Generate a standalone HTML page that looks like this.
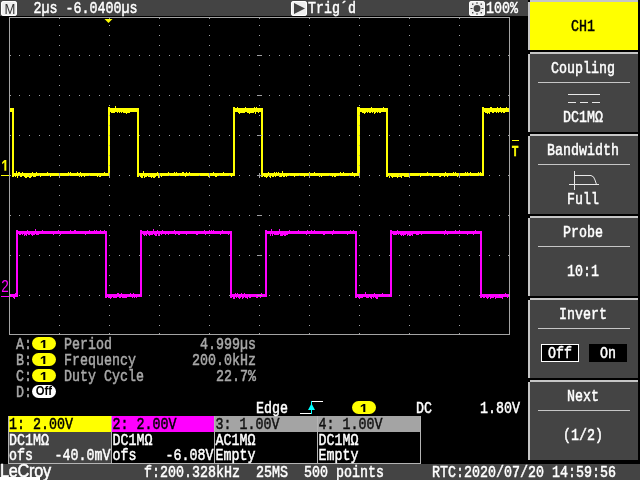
<!DOCTYPE html>
<html><head><meta charset="utf-8"><title>LeCroy</title>
<style>
html,body{margin:0;padding:0;background:#000;}
body{width:640px;height:480px;overflow:hidden;position:relative;font-family:"Liberation Mono", "DejaVu Sans Mono", monospace;}
.a{position:absolute;}
.t{position:absolute;font-family:"Liberation Mono", "DejaVu Sans Mono", monospace;font-size:13.333px;line-height:16px;height:16px;white-space:pre;transform-origin:0 0;transform:translateY(-2.5px) scaleY(1.25);font-weight:normal;-webkit-text-stroke:0.4px currentColor;letter-spacing:0;}
.p{position:absolute;width:24px;height:13px;line-height:13px;text-align:center;font-family:"Liberation Sans",sans-serif;font-weight:bold;color:#000;}
.m{position:absolute;width:10px;height:16px;line-height:16px;text-align:center;font-family:"Liberation Sans",sans-serif;font-size:16.5px;transform-origin:0 0;transform:translateX(0.8px) scaleX(0.82);}
.bar{position:absolute;background:#444;}
.btn{position:absolute;left:528px;width:110px;background:#444;}
.btn:before{content:"";position:absolute;left:2px;top:0;right:0;height:2px;background:#c6c6c6;}
.btn:after{content:"";position:absolute;left:0;top:2px;width:2px;bottom:0;background:#c6c6c6;}
.btn b{position:absolute;left:0;top:0;width:2px;height:2px;background:#000;}
.sep{position:absolute;left:10px;width:92px;top:30px;height:1px;background:#c6c6c6;}
.pill{position:absolute;width:24px;height:13px;border-radius:6.5px;background:#ffff00;}
.ico{position:absolute;width:16px;height:15px;border-radius:3px;background:#eee;top:1px;box-shadow:inset 0 0 0 1px #fff;}
.chb{position:absolute;top:416px;height:47px;width:102px;border:1px solid #b4b4b4;border-top:none;border-left:none;background:#000;}
.chh{position:absolute;left:0;top:0;right:0;height:16px;}
</style></head><body>

<div class="bar" style="left:0;top:0;width:528px;height:16px"></div>
<div class="ico" style="left:1px"></div>
<div class="ico" style="left:291px"><svg class="a" style="left:0;top:0" width="16" height="15"><path d="M3 2 L14 7.5 L3 13z" fill="#444"/></svg></div>
<div class="ico" style="left:469px"><svg class="a" style="left:0;top:0" width="16" height="15"><circle cx="8" cy="7.5" r="3.4" fill="#444"/><g fill="#444"><rect x="7.5" y="1" width="1" height="2"/><rect x="7.5" y="12" width="1" height="2"/><rect x="1.5" y="7" width="2" height="1"/><rect x="12.5" y="7" width="2" height="1"/><rect x="3" y="2.5" width="1.4" height="1.4"/><rect x="11.6" y="2.5" width="1.4" height="1.4"/><rect x="3" y="11" width="1.4" height="1.4"/><rect x="11.6" y="11" width="1.4" height="1.4"/></g></svg></div>
<svg class="a" style="left:0;top:0" width="528" height="340" viewBox="0 0 528 340">
<path d="M12 108h2V177h-2zM108 107h2V176h-2zM137 108h2V177h-2zM233 107h2V176h-2zM261 108h2V177h-2zM357 107h3V176h-3zM386 108h2V177h-2zM482 107h2V176h-2z" fill="#ffff00" shape-rendering="crispEdges"/>
<path d="M10 110H14M108 110H139M233 110H263M357 110H388M482 110H509" fill="none" stroke="#ffff00" stroke-width="4" shape-rendering="crispEdges"/>
<path d="M12 174.5H110M137 174.5H235M261 174.5H360M386 174.5H484" fill="none" stroke="#ffff00" stroke-width="3" shape-rendering="crispEdges"/>
<path d="M15 176.0h1v1h-1zM16 171.0h1v2h-1zM17 176.0h1v2h-1zM18 172.0h1v1h-1zM19 172.0h1v1h-1zM20 176.0h1v1h-1zM21 176.0h1v1h-1zM22 172.0h1v1h-1zM24 176.0h1v1h-1zM25 176.0h1v2h-1zM26 176.0h1v2h-1zM27 176.0h1v1h-1zM28 176.0h1v1h-1zM29 176.0h1v2h-1zM30 176.0h1v2h-1zM31 176.0h1v1h-1zM32 172.0h1v1h-1zM33 176.0h1v1h-1zM34 176.0h1v1h-1zM35 176.0h1v1h-1zM36 172.0h1v1h-1zM40 176.0h1v1h-1zM47 172.0h1v1h-1zM50 176.0h1v1h-1zM68 172.0h1v1h-1zM70 172.0h1v1h-1zM77 172.0h1v1h-1zM79 176.0h1v1h-1zM80 172.0h1v1h-1zM81 176.0h1v1h-1zM84 176.0h1v1h-1zM97 176.0h1v1h-1zM99 176.0h1v1h-1zM100 176.0h1v1h-1zM104 172.0h1v1h-1zM111 112.0h1v1h-1zM112 112.0h1v1h-1zM113 112.0h1v1h-1zM114 112.0h1v1h-1zM115 106.0h1v2h-1zM117 112.0h1v1h-1zM119 112.0h1v1h-1zM121 112.0h1v1h-1zM123 112.0h1v1h-1zM124 112.0h1v1h-1zM125 112.0h1v1h-1zM126 112.0h1v2h-1zM127 112.0h1v1h-1zM128 112.0h1v1h-1zM129 112.0h1v1h-1zM140 176.0h1v1h-1zM141 176.0h1v2h-1zM142 176.0h1v2h-1zM143 171.0h1v2h-1zM144 176.0h1v2h-1zM145 176.0h1v1h-1zM146 176.0h1v1h-1zM148 176.0h1v1h-1zM149 176.0h1v1h-1zM150 176.0h1v1h-1zM151 176.0h1v2h-1zM152 176.0h1v1h-1zM153 176.0h1v2h-1zM154 176.0h1v2h-1zM155 176.0h1v1h-1zM157 172.0h1v1h-1zM158 176.0h1v2h-1zM159 176.0h1v1h-1zM161 176.0h1v1h-1zM168 172.0h1v1h-1zM174 172.0h1v1h-1zM176 172.0h1v1h-1zM182 172.0h1v1h-1zM183 172.0h1v1h-1zM185 176.0h1v1h-1zM186 172.0h1v1h-1zM189 172.0h1v1h-1zM208 176.0h1v1h-1zM213 172.0h1v1h-1zM215 176.0h1v1h-1zM216 176.0h1v1h-1zM223 172.0h1v1h-1zM231 176.0h1v1h-1zM237 107.0h1v1h-1zM238 112.0h1v1h-1zM239 112.0h1v2h-1zM240 112.0h1v1h-1zM241 112.0h1v1h-1zM242 112.0h1v1h-1zM243 112.0h1v1h-1zM244 112.0h1v1h-1zM245 107.0h1v1h-1zM247 112.0h1v1h-1zM248 112.0h1v1h-1zM249 112.0h1v2h-1zM250 112.0h1v1h-1zM251 112.0h1v1h-1zM252 112.0h1v1h-1zM253 112.0h1v1h-1zM254 107.0h1v1h-1zM255 112.0h1v2h-1zM256 107.0h1v1h-1zM258 112.0h1v1h-1zM264 176.0h1v1h-1zM265 176.0h1v1h-1zM266 176.0h1v2h-1zM267 176.0h1v1h-1zM268 172.0h1v1h-1zM269 176.0h1v1h-1zM270 176.0h1v2h-1zM272 176.0h1v1h-1zM273 176.0h1v1h-1zM274 172.0h1v1h-1zM275 176.0h1v1h-1zM276 172.0h1v1h-1zM278 172.0h1v1h-1zM279 176.0h1v1h-1zM280 176.0h1v1h-1zM281 176.0h1v1h-1zM282 171.0h1v2h-1zM283 176.0h1v1h-1zM284 176.0h1v1h-1zM286 176.0h1v1h-1zM294 176.0h1v1h-1zM304 176.0h1v1h-1zM309 172.0h1v1h-1zM314 172.0h1v1h-1zM319 176.0h1v1h-1zM321 176.0h1v1h-1zM332 176.0h1v1h-1zM334 176.0h1v1h-1zM335 176.0h1v1h-1zM340 172.0h1v1h-1zM343 172.0h1v1h-1zM352 172.0h1v1h-1zM354 176.0h1v1h-1zM362 112.0h1v1h-1zM363 112.0h1v1h-1zM364 112.0h1v2h-1zM365 112.0h1v1h-1zM367 112.0h1v1h-1zM369 112.0h1v1h-1zM370 112.0h1v1h-1zM371 107.0h1v1h-1zM372 112.0h1v1h-1zM374 112.0h1v2h-1zM375 112.0h1v1h-1zM377 112.0h1v1h-1zM379 112.0h1v1h-1zM380 112.0h1v1h-1zM383 107.0h1v1h-1zM389 176.0h1v2h-1zM391 176.0h1v1h-1zM392 176.0h1v2h-1zM393 176.0h1v1h-1zM394 176.0h1v1h-1zM395 176.0h1v1h-1zM396 176.0h1v1h-1zM397 176.0h1v2h-1zM398 176.0h1v1h-1zM399 176.0h1v1h-1zM400 176.0h1v1h-1zM401 176.0h1v2h-1zM404 176.0h1v1h-1zM405 176.0h1v1h-1zM406 176.0h1v1h-1zM407 176.0h1v1h-1zM408 176.0h1v1h-1zM420 176.0h1v1h-1zM427 172.0h1v1h-1zM432 176.0h1v1h-1zM439 176.0h1v1h-1zM440 176.0h1v1h-1zM444 176.0h1v1h-1zM445 172.0h1v1h-1zM447 176.0h1v1h-1zM453 172.0h1v1h-1zM455 172.0h1v1h-1zM457 176.0h1v1h-1zM465 172.0h1v1h-1zM467 172.0h1v1h-1zM470 172.0h1v1h-1zM478 172.0h1v1h-1zM480 172.0h1v1h-1zM485 112.0h1v1h-1zM486 112.0h1v1h-1zM487 112.0h1v2h-1zM488 112.0h1v1h-1zM489 112.0h1v2h-1zM490 107.0h1v1h-1zM491 107.0h1v1h-1zM492 112.0h1v1h-1zM493 112.0h1v1h-1zM496 112.0h1v1h-1zM497 107.0h1v1h-1zM498 112.0h1v1h-1zM500 107.0h1v1h-1zM501 112.0h1v1h-1zM503 112.0h1v1h-1zM504 112.0h1v1h-1zM506 107.0h1v1h-1z" fill="#ffff00" shape-rendering="crispEdges"/>
<path d="M16 230h2V297h-2zM105 231h2V298h-2zM140 230h2V297h-2zM230 231h2V298h-2zM265 230h2V297h-2zM355 231h2V298h-2zM390 230h2V297h-2zM480 231h2V298h-2z" fill="#ff00ff" shape-rendering="crispEdges"/>
<path d="M16 232.5H107M140 232.5H232M265 232.5H357M390 232.5H482" fill="none" stroke="#ff00ff" stroke-width="3" shape-rendering="crispEdges"/>
<path d="M10 295.5H18M105 295.5H142M230 295.5H267M355 295.5H392M480 295.5H509" fill="none" stroke="#ff00ff" stroke-width="3" shape-rendering="crispEdges"/>
<path d="M13 297.0h1v1h-1zM14 297.0h1v2h-1zM15 293.0h1v1h-1zM19 234.0h1v1h-1zM20 234.0h1v1h-1zM22 234.0h1v1h-1zM24 234.0h1v2h-1zM25 234.0h1v1h-1zM26 234.0h1v2h-1zM27 230.0h1v1h-1zM28 234.0h1v1h-1zM29 234.0h1v1h-1zM31 234.0h1v1h-1zM32 234.0h1v2h-1zM33 234.0h1v1h-1zM34 234.0h1v1h-1zM35 229.0h1v2h-1zM36 234.0h1v1h-1zM37 234.0h1v1h-1zM38 234.0h1v1h-1zM42 230.0h1v1h-1zM53 234.0h1v1h-1zM58 230.0h1v1h-1zM60 234.0h1v1h-1zM70 230.0h1v1h-1zM74 230.0h1v1h-1zM75 230.0h1v1h-1zM85 234.0h1v1h-1zM89 230.0h1v1h-1zM94 230.0h1v1h-1zM96 230.0h1v1h-1zM100 230.0h1v1h-1zM104 230.0h1v1h-1zM108 297.0h1v1h-1zM109 297.0h1v1h-1zM110 297.0h1v2h-1zM111 297.0h1v1h-1zM113 297.0h1v1h-1zM114 297.0h1v1h-1zM115 297.0h1v1h-1zM116 297.0h1v1h-1zM117 293.0h1v1h-1zM118 293.0h1v1h-1zM119 297.0h1v1h-1zM120 297.0h1v1h-1zM121 293.0h1v1h-1zM122 297.0h1v1h-1zM123 297.0h1v1h-1zM124 297.0h1v1h-1zM125 297.0h1v1h-1zM126 297.0h1v1h-1zM130 293.0h1v1h-1zM132 297.0h1v1h-1zM133 293.0h1v1h-1zM134 297.0h1v1h-1zM136 297.0h1v1h-1zM143 234.0h1v1h-1zM144 234.0h1v2h-1zM145 234.0h1v1h-1zM146 234.0h1v2h-1zM147 230.0h1v1h-1zM148 234.0h1v1h-1zM149 234.0h1v2h-1zM150 234.0h1v1h-1zM151 234.0h1v1h-1zM152 234.0h1v1h-1zM153 229.0h1v2h-1zM154 234.0h1v1h-1zM155 234.0h1v2h-1zM156 234.0h1v2h-1zM157 230.0h1v1h-1zM158 234.0h1v2h-1zM159 234.0h1v1h-1zM161 234.0h1v1h-1zM162 230.0h1v1h-1zM165 234.0h1v1h-1zM168 234.0h1v1h-1zM174 230.0h1v1h-1zM175 234.0h1v1h-1zM178 234.0h1v1h-1zM179 234.0h1v1h-1zM186 234.0h1v1h-1zM196 234.0h1v1h-1zM197 234.0h1v1h-1zM204 230.0h1v1h-1zM205 234.0h1v1h-1zM209 230.0h1v1h-1zM211 230.0h1v1h-1zM213 230.0h1v1h-1zM220 234.0h1v1h-1zM222 230.0h1v1h-1zM228 234.0h1v1h-1zM233 297.0h1v2h-1zM234 297.0h1v2h-1zM235 293.0h1v1h-1zM236 297.0h1v1h-1zM237 293.0h1v1h-1zM238 297.0h1v1h-1zM239 297.0h1v2h-1zM240 297.0h1v1h-1zM241 293.0h1v1h-1zM242 297.0h1v2h-1zM243 297.0h1v1h-1zM244 293.0h1v1h-1zM245 297.0h1v1h-1zM246 297.0h1v1h-1zM247 297.0h1v2h-1zM249 297.0h1v1h-1zM250 297.0h1v1h-1zM256 297.0h1v1h-1zM257 297.0h1v1h-1zM260 297.0h1v1h-1zM261 293.0h1v1h-1zM270 234.0h1v2h-1zM271 229.0h1v2h-1zM272 234.0h1v2h-1zM274 234.0h1v1h-1zM275 234.0h1v1h-1zM276 234.0h1v1h-1zM277 234.0h1v1h-1zM278 234.0h1v1h-1zM279 229.0h1v2h-1zM280 234.0h1v2h-1zM281 234.0h1v2h-1zM282 234.0h1v2h-1zM283 234.0h1v1h-1zM284 234.0h1v2h-1zM285 234.0h1v2h-1zM286 234.0h1v1h-1zM287 234.0h1v1h-1zM289 230.0h1v1h-1zM298 230.0h1v1h-1zM306 234.0h1v1h-1zM307 230.0h1v1h-1zM311 230.0h1v1h-1zM314 230.0h1v1h-1zM323 234.0h1v1h-1zM324 234.0h1v1h-1zM332 234.0h1v1h-1zM333 230.0h1v1h-1zM347 234.0h1v1h-1zM350 230.0h1v1h-1zM353 230.0h1v1h-1zM358 297.0h1v1h-1zM359 297.0h1v2h-1zM360 297.0h1v1h-1zM361 297.0h1v1h-1zM362 297.0h1v1h-1zM365 292.0h1v2h-1zM366 297.0h1v1h-1zM367 297.0h1v1h-1zM368 297.0h1v1h-1zM370 297.0h1v1h-1zM371 297.0h1v2h-1zM373 297.0h1v1h-1zM374 293.0h1v1h-1zM375 297.0h1v1h-1zM376 297.0h1v2h-1zM377 297.0h1v2h-1zM382 293.0h1v1h-1zM393 234.0h1v1h-1zM394 234.0h1v1h-1zM395 234.0h1v1h-1zM396 234.0h1v1h-1zM397 230.0h1v1h-1zM398 234.0h1v1h-1zM400 234.0h1v1h-1zM401 234.0h1v2h-1zM402 234.0h1v1h-1zM403 234.0h1v2h-1zM404 234.0h1v1h-1zM405 234.0h1v1h-1zM407 234.0h1v2h-1zM408 234.0h1v1h-1zM409 234.0h1v1h-1zM410 234.0h1v2h-1zM411 234.0h1v1h-1zM412 234.0h1v2h-1zM416 234.0h1v1h-1zM417 234.0h1v1h-1zM418 234.0h1v1h-1zM421 234.0h1v1h-1zM444 234.0h1v1h-1zM445 230.0h1v1h-1zM447 234.0h1v1h-1zM455 230.0h1v1h-1zM459 230.0h1v1h-1zM467 234.0h1v1h-1zM473 234.0h1v1h-1zM475 230.0h1v1h-1zM483 297.0h1v1h-1zM484 297.0h1v1h-1zM486 297.0h1v1h-1zM487 297.0h1v2h-1zM488 297.0h1v1h-1zM490 297.0h1v2h-1zM491 297.0h1v1h-1zM492 297.0h1v1h-1zM493 297.0h1v1h-1zM495 297.0h1v2h-1zM496 297.0h1v1h-1zM497 297.0h1v1h-1zM498 297.0h1v1h-1zM499 297.0h1v1h-1zM500 297.0h1v1h-1zM501 297.0h1v1h-1zM502 297.0h1v2h-1zM505 293.0h1v1h-1zM507 297.0h1v1h-1z" fill="#ff00ff" shape-rendering="crispEdges"/>
<path d="M19 55h1v1h-1zM19 95h1v1h-1zM19 135h1v1h-1zM19 175h1v1h-1zM19 215h1v1h-1zM19 255h1v1h-1zM19 295h1v1h-1zM29 55h1v1h-1zM29 95h1v1h-1zM29 135h1v1h-1zM29 175h1v1h-1zM29 215h1v1h-1zM29 255h1v1h-1zM29 295h1v1h-1zM39 55h1v1h-1zM39 95h1v1h-1zM39 135h1v1h-1zM39 175h1v1h-1zM39 215h1v1h-1zM39 255h1v1h-1zM39 295h1v1h-1zM49 55h1v1h-1zM49 95h1v1h-1zM49 135h1v1h-1zM49 175h1v1h-1zM49 215h1v1h-1zM49 255h1v1h-1zM49 295h1v1h-1zM59 25h1v1h-1zM59 35h1v1h-1zM59 45h1v1h-1zM59 55h1v1h-1zM59 65h1v1h-1zM59 75h1v1h-1zM59 85h1v1h-1zM59 95h1v1h-1zM59 105h1v1h-1zM59 115h1v1h-1zM59 125h1v1h-1zM59 135h1v1h-1zM59 145h1v1h-1zM59 155h1v1h-1zM59 165h1v1h-1zM59 175h1v1h-1zM59 185h1v1h-1zM59 195h1v1h-1zM59 205h1v1h-1zM59 215h1v1h-1zM59 225h1v1h-1zM59 235h1v1h-1zM59 245h1v1h-1zM59 255h1v1h-1zM59 265h1v1h-1zM59 275h1v1h-1zM59 285h1v1h-1zM59 295h1v1h-1zM59 305h1v1h-1zM59 315h1v1h-1zM59 325h1v1h-1zM69 55h1v1h-1zM69 95h1v1h-1zM69 135h1v1h-1zM69 175h1v1h-1zM69 215h1v1h-1zM69 255h1v1h-1zM69 295h1v1h-1zM79 55h1v1h-1zM79 95h1v1h-1zM79 135h1v1h-1zM79 175h1v1h-1zM79 215h1v1h-1zM79 255h1v1h-1zM79 295h1v1h-1zM89 55h1v1h-1zM89 95h1v1h-1zM89 135h1v1h-1zM89 175h1v1h-1zM89 215h1v1h-1zM89 255h1v1h-1zM89 295h1v1h-1zM99 55h1v1h-1zM99 95h1v1h-1zM99 135h1v1h-1zM99 175h1v1h-1zM99 215h1v1h-1zM99 255h1v1h-1zM99 295h1v1h-1zM109 25h1v1h-1zM109 35h1v1h-1zM109 45h1v1h-1zM109 55h1v1h-1zM109 65h1v1h-1zM109 75h1v1h-1zM109 85h1v1h-1zM109 95h1v1h-1zM109 105h1v1h-1zM109 115h1v1h-1zM109 125h1v1h-1zM109 135h1v1h-1zM109 145h1v1h-1zM109 155h1v1h-1zM109 165h1v1h-1zM109 175h1v1h-1zM109 185h1v1h-1zM109 195h1v1h-1zM109 205h1v1h-1zM109 215h1v1h-1zM109 225h1v1h-1zM109 235h1v1h-1zM109 245h1v1h-1zM109 255h1v1h-1zM109 265h1v1h-1zM109 275h1v1h-1zM109 285h1v1h-1zM109 295h1v1h-1zM109 305h1v1h-1zM109 315h1v1h-1zM109 325h1v1h-1zM119 55h1v1h-1zM119 95h1v1h-1zM119 135h1v1h-1zM119 175h1v1h-1zM119 215h1v1h-1zM119 255h1v1h-1zM119 295h1v1h-1zM129 55h1v1h-1zM129 95h1v1h-1zM129 135h1v1h-1zM129 175h1v1h-1zM129 215h1v1h-1zM129 255h1v1h-1zM129 295h1v1h-1zM139 55h1v1h-1zM139 95h1v1h-1zM139 135h1v1h-1zM139 175h1v1h-1zM139 215h1v1h-1zM139 255h1v1h-1zM139 295h1v1h-1zM149 55h1v1h-1zM149 95h1v1h-1zM149 135h1v1h-1zM149 175h1v1h-1zM149 215h1v1h-1zM149 255h1v1h-1zM149 295h1v1h-1zM159 25h1v1h-1zM159 35h1v1h-1zM159 45h1v1h-1zM159 55h1v1h-1zM159 65h1v1h-1zM159 75h1v1h-1zM159 85h1v1h-1zM159 95h1v1h-1zM159 105h1v1h-1zM159 115h1v1h-1zM159 125h1v1h-1zM159 135h1v1h-1zM159 145h1v1h-1zM159 155h1v1h-1zM159 165h1v1h-1zM159 175h1v1h-1zM159 185h1v1h-1zM159 195h1v1h-1zM159 205h1v1h-1zM159 215h1v1h-1zM159 225h1v1h-1zM159 235h1v1h-1zM159 245h1v1h-1zM159 255h1v1h-1zM159 265h1v1h-1zM159 275h1v1h-1zM159 285h1v1h-1zM159 295h1v1h-1zM159 305h1v1h-1zM159 315h1v1h-1zM159 325h1v1h-1zM169 55h1v1h-1zM169 95h1v1h-1zM169 135h1v1h-1zM169 175h1v1h-1zM169 215h1v1h-1zM169 255h1v1h-1zM169 295h1v1h-1zM179 55h1v1h-1zM179 95h1v1h-1zM179 135h1v1h-1zM179 175h1v1h-1zM179 215h1v1h-1zM179 255h1v1h-1zM179 295h1v1h-1zM189 55h1v1h-1zM189 95h1v1h-1zM189 135h1v1h-1zM189 175h1v1h-1zM189 215h1v1h-1zM189 255h1v1h-1zM189 295h1v1h-1zM199 55h1v1h-1zM199 95h1v1h-1zM199 135h1v1h-1zM199 175h1v1h-1zM199 215h1v1h-1zM199 255h1v1h-1zM199 295h1v1h-1zM209 25h1v1h-1zM209 35h1v1h-1zM209 45h1v1h-1zM209 55h1v1h-1zM209 65h1v1h-1zM209 75h1v1h-1zM209 85h1v1h-1zM209 95h1v1h-1zM209 105h1v1h-1zM209 115h1v1h-1zM209 125h1v1h-1zM209 135h1v1h-1zM209 145h1v1h-1zM209 155h1v1h-1zM209 165h1v1h-1zM209 175h1v1h-1zM209 185h1v1h-1zM209 195h1v1h-1zM209 205h1v1h-1zM209 215h1v1h-1zM209 225h1v1h-1zM209 235h1v1h-1zM209 245h1v1h-1zM209 255h1v1h-1zM209 265h1v1h-1zM209 275h1v1h-1zM209 285h1v1h-1zM209 295h1v1h-1zM209 305h1v1h-1zM209 315h1v1h-1zM209 325h1v1h-1zM219 55h1v1h-1zM219 95h1v1h-1zM219 135h1v1h-1zM219 175h1v1h-1zM219 215h1v1h-1zM219 255h1v1h-1zM219 295h1v1h-1zM229 55h1v1h-1zM229 95h1v1h-1zM229 135h1v1h-1zM229 175h1v1h-1zM229 215h1v1h-1zM229 255h1v1h-1zM229 295h1v1h-1zM239 55h1v1h-1zM239 95h1v1h-1zM239 135h1v1h-1zM239 175h1v1h-1zM239 215h1v1h-1zM239 255h1v1h-1zM239 295h1v1h-1zM249 55h1v1h-1zM249 95h1v1h-1zM249 135h1v1h-1zM249 175h1v1h-1zM249 215h1v1h-1zM249 255h1v1h-1zM249 295h1v1h-1zM259 25h1v1h-1zM259 35h1v1h-1zM259 45h1v1h-1zM259 55h1v1h-1zM259 65h1v1h-1zM259 75h1v1h-1zM259 85h1v1h-1zM259 95h1v1h-1zM259 105h1v1h-1zM259 115h1v1h-1zM259 125h1v1h-1zM259 135h1v1h-1zM259 145h1v1h-1zM259 155h1v1h-1zM259 165h1v1h-1zM259 175h1v1h-1zM259 185h1v1h-1zM259 195h1v1h-1zM259 205h1v1h-1zM259 215h1v1h-1zM259 225h1v1h-1zM259 235h1v1h-1zM259 245h1v1h-1zM259 255h1v1h-1zM259 265h1v1h-1zM259 275h1v1h-1zM259 285h1v1h-1zM259 295h1v1h-1zM259 305h1v1h-1zM259 315h1v1h-1zM259 325h1v1h-1zM269 55h1v1h-1zM269 95h1v1h-1zM269 135h1v1h-1zM269 175h1v1h-1zM269 215h1v1h-1zM269 255h1v1h-1zM269 295h1v1h-1zM279 55h1v1h-1zM279 95h1v1h-1zM279 135h1v1h-1zM279 175h1v1h-1zM279 215h1v1h-1zM279 255h1v1h-1zM279 295h1v1h-1zM289 55h1v1h-1zM289 95h1v1h-1zM289 135h1v1h-1zM289 175h1v1h-1zM289 215h1v1h-1zM289 255h1v1h-1zM289 295h1v1h-1zM299 55h1v1h-1zM299 95h1v1h-1zM299 135h1v1h-1zM299 175h1v1h-1zM299 215h1v1h-1zM299 255h1v1h-1zM299 295h1v1h-1zM309 25h1v1h-1zM309 35h1v1h-1zM309 45h1v1h-1zM309 55h1v1h-1zM309 65h1v1h-1zM309 75h1v1h-1zM309 85h1v1h-1zM309 95h1v1h-1zM309 105h1v1h-1zM309 115h1v1h-1zM309 125h1v1h-1zM309 135h1v1h-1zM309 145h1v1h-1zM309 155h1v1h-1zM309 165h1v1h-1zM309 175h1v1h-1zM309 185h1v1h-1zM309 195h1v1h-1zM309 205h1v1h-1zM309 215h1v1h-1zM309 225h1v1h-1zM309 235h1v1h-1zM309 245h1v1h-1zM309 255h1v1h-1zM309 265h1v1h-1zM309 275h1v1h-1zM309 285h1v1h-1zM309 295h1v1h-1zM309 305h1v1h-1zM309 315h1v1h-1zM309 325h1v1h-1zM319 55h1v1h-1zM319 95h1v1h-1zM319 135h1v1h-1zM319 175h1v1h-1zM319 215h1v1h-1zM319 255h1v1h-1zM319 295h1v1h-1zM329 55h1v1h-1zM329 95h1v1h-1zM329 135h1v1h-1zM329 175h1v1h-1zM329 215h1v1h-1zM329 255h1v1h-1zM329 295h1v1h-1zM339 55h1v1h-1zM339 95h1v1h-1zM339 135h1v1h-1zM339 175h1v1h-1zM339 215h1v1h-1zM339 255h1v1h-1zM339 295h1v1h-1zM349 55h1v1h-1zM349 95h1v1h-1zM349 135h1v1h-1zM349 175h1v1h-1zM349 215h1v1h-1zM349 255h1v1h-1zM349 295h1v1h-1zM359 25h1v1h-1zM359 35h1v1h-1zM359 45h1v1h-1zM359 55h1v1h-1zM359 65h1v1h-1zM359 75h1v1h-1zM359 85h1v1h-1zM359 95h1v1h-1zM359 105h1v1h-1zM359 115h1v1h-1zM359 125h1v1h-1zM359 135h1v1h-1zM359 145h1v1h-1zM359 155h1v1h-1zM359 165h1v1h-1zM359 175h1v1h-1zM359 185h1v1h-1zM359 195h1v1h-1zM359 205h1v1h-1zM359 215h1v1h-1zM359 225h1v1h-1zM359 235h1v1h-1zM359 245h1v1h-1zM359 255h1v1h-1zM359 265h1v1h-1zM359 275h1v1h-1zM359 285h1v1h-1zM359 295h1v1h-1zM359 305h1v1h-1zM359 315h1v1h-1zM359 325h1v1h-1zM369 55h1v1h-1zM369 95h1v1h-1zM369 135h1v1h-1zM369 175h1v1h-1zM369 215h1v1h-1zM369 255h1v1h-1zM369 295h1v1h-1zM379 55h1v1h-1zM379 95h1v1h-1zM379 135h1v1h-1zM379 175h1v1h-1zM379 215h1v1h-1zM379 255h1v1h-1zM379 295h1v1h-1zM389 55h1v1h-1zM389 95h1v1h-1zM389 135h1v1h-1zM389 175h1v1h-1zM389 215h1v1h-1zM389 255h1v1h-1zM389 295h1v1h-1zM399 55h1v1h-1zM399 95h1v1h-1zM399 135h1v1h-1zM399 175h1v1h-1zM399 215h1v1h-1zM399 255h1v1h-1zM399 295h1v1h-1zM409 25h1v1h-1zM409 35h1v1h-1zM409 45h1v1h-1zM409 55h1v1h-1zM409 65h1v1h-1zM409 75h1v1h-1zM409 85h1v1h-1zM409 95h1v1h-1zM409 105h1v1h-1zM409 115h1v1h-1zM409 125h1v1h-1zM409 135h1v1h-1zM409 145h1v1h-1zM409 155h1v1h-1zM409 165h1v1h-1zM409 175h1v1h-1zM409 185h1v1h-1zM409 195h1v1h-1zM409 205h1v1h-1zM409 215h1v1h-1zM409 225h1v1h-1zM409 235h1v1h-1zM409 245h1v1h-1zM409 255h1v1h-1zM409 265h1v1h-1zM409 275h1v1h-1zM409 285h1v1h-1zM409 295h1v1h-1zM409 305h1v1h-1zM409 315h1v1h-1zM409 325h1v1h-1zM419 55h1v1h-1zM419 95h1v1h-1zM419 135h1v1h-1zM419 175h1v1h-1zM419 215h1v1h-1zM419 255h1v1h-1zM419 295h1v1h-1zM429 55h1v1h-1zM429 95h1v1h-1zM429 135h1v1h-1zM429 175h1v1h-1zM429 215h1v1h-1zM429 255h1v1h-1zM429 295h1v1h-1zM439 55h1v1h-1zM439 95h1v1h-1zM439 135h1v1h-1zM439 175h1v1h-1zM439 215h1v1h-1zM439 255h1v1h-1zM439 295h1v1h-1zM449 55h1v1h-1zM449 95h1v1h-1zM449 135h1v1h-1zM449 175h1v1h-1zM449 215h1v1h-1zM449 255h1v1h-1zM449 295h1v1h-1zM459 25h1v1h-1zM459 35h1v1h-1zM459 45h1v1h-1zM459 55h1v1h-1zM459 65h1v1h-1zM459 75h1v1h-1zM459 85h1v1h-1zM459 95h1v1h-1zM459 105h1v1h-1zM459 115h1v1h-1zM459 125h1v1h-1zM459 135h1v1h-1zM459 145h1v1h-1zM459 155h1v1h-1zM459 165h1v1h-1zM459 175h1v1h-1zM459 185h1v1h-1zM459 195h1v1h-1zM459 205h1v1h-1zM459 215h1v1h-1zM459 225h1v1h-1zM459 235h1v1h-1zM459 245h1v1h-1zM459 255h1v1h-1zM459 265h1v1h-1zM459 275h1v1h-1zM459 285h1v1h-1zM459 295h1v1h-1zM459 305h1v1h-1zM459 315h1v1h-1zM459 325h1v1h-1zM469 55h1v1h-1zM469 95h1v1h-1zM469 135h1v1h-1zM469 175h1v1h-1zM469 215h1v1h-1zM469 255h1v1h-1zM469 295h1v1h-1zM479 55h1v1h-1zM479 95h1v1h-1zM479 135h1v1h-1zM479 175h1v1h-1zM479 215h1v1h-1zM479 255h1v1h-1zM479 295h1v1h-1zM489 55h1v1h-1zM489 95h1v1h-1zM489 135h1v1h-1zM489 175h1v1h-1zM489 215h1v1h-1zM489 255h1v1h-1zM489 295h1v1h-1zM499 55h1v1h-1zM499 95h1v1h-1zM499 135h1v1h-1zM499 175h1v1h-1zM499 215h1v1h-1zM499 255h1v1h-1zM499 295h1v1h-1z" fill="#a0a0a2" shape-rendering="crispEdges"/>
<path d="M59 18h1v1h-1zM59 333h1v1h-1zM109 18h1v1h-1zM109 333h1v1h-1zM159 18h1v1h-1zM159 333h1v1h-1zM209 18h1v1h-1zM209 333h1v1h-1zM259 18h1v1h-1zM259 333h1v1h-1zM309 18h1v1h-1zM309 333h1v1h-1zM359 18h1v1h-1zM359 333h1v1h-1zM409 18h1v1h-1zM409 333h1v1h-1zM459 18h1v1h-1zM459 333h1v1h-1zM10 55h1v1h-1zM508 55h1v1h-1zM10 95h1v1h-1zM508 95h1v1h-1zM10 135h1v1h-1zM508 135h1v1h-1zM10 175h1v1h-1zM508 175h1v1h-1zM10 215h1v1h-1zM508 215h1v1h-1zM10 255h1v1h-1zM508 255h1v1h-1zM10 295h1v1h-1zM508 295h1v1h-1zM59 173h1v5h-1zM109 173h1v5h-1zM159 173h1v5h-1zM209 173h1v5h-1zM259 173h1v5h-1zM309 173h1v5h-1zM359 173h1v5h-1zM409 173h1v5h-1zM459 173h1v5h-1zM257 55h5v1h-5zM257 95h5v1h-5zM257 135h5v1h-5zM257 175h5v1h-5zM257 215h5v1h-5zM257 255h5v1h-5zM257 295h5v1h-5z" fill="#a0a0a2" shape-rendering="crispEdges"/>
<rect x="9.5" y="17.5" width="500" height="317" fill="none" stroke="#a4a4a4" stroke-width="1" shape-rendering="crispEdges"/>
<path d="M104.5 19 L112.5 19 L108.5 23z" fill="#ffff00"/>
<rect x="1" y="175" width="8" height="1" fill="#ffff00" shape-rendering="crispEdges"/>
<rect x="1" y="296" width="8" height="1" fill="#ff00ff" shape-rendering="crispEdges"/>
<g fill="#ffff00" shape-rendering="crispEdges"><rect x="512" y="140" width="7" height="1"/></g>
</svg>
<div class="pill" style="left:32px;top:337px"></div>
<div class="pill" style="left:32px;top:353px"></div>
<div class="pill" style="left:32px;top:369px"></div>
<div class="pill" style="left:32px;top:385px;background:#fff"></div>
<svg class="a" style="left:296px;top:398px" width="32" height="18" viewBox="296 398 32 18"><g shape-rendering="crispEdges"><rect x="300" y="413" width="11" height="1" fill="#fff"/><rect x="312" y="401" width="11" height="1" fill="#fff"/><rect x="311" y="401" width="1" height="13" fill="#00ffff"/></g><path d="M311.5 403.5 L315 410 L308 410z" fill="#00ffff"/></svg>
<div class="pill" style="left:352px;top:401px"></div>
<div class="chb" style="left:9px;background:#444"><div class="chh" style="background:#ffff00"></div></div>
<div class="chb" style="left:112px;background:#000"><div class="chh" style="background:#ff00ff"></div></div>
<div class="chb" style="left:215px;background:#000"><div class="chh" style="background:#a4a4a4"></div></div>
<div class="chb" style="left:318px;background:#000"><div class="chh" style="background:#a4a4a4"></div></div>
<div class="a" style="left:8px;top:416px;width:1px;height:48px;background:#b4b4b4"></div>
<div class="bar" style="left:0;top:464px;width:640px;height:16px"></div>
<div class="a" style="left:0;top:477px;width:40px;height:3px;background:#fff"></div>
<div class="btn" style="top:0;height:50px;background:#ffff00"><b></b></div>
<div class="btn" style="top:52px;height:80px"><b></b><div class="sep"></div></div>


<svg class="a" style="left:560px;top:90px" width="48" height="16" viewBox="560 90 48 16"><g fill="#e8e8e8" shape-rendering="crispEdges"><rect x="568" y="94" width="32" height="1"/><rect x="568" y="102" width="8" height="1"/><rect x="580" y="102" width="8" height="1"/><rect x="592" y="102" width="8" height="1"/></g></svg>
<div class="btn" style="top:134px;height:80px"><b></b><div class="sep"></div></div>


<svg class="a" style="left:560px;top:168px" width="48" height="24" viewBox="560 168 48 24"><g fill="#e8e8e8" shape-rendering="crispEdges"><rect x="574" y="171" width="1" height="19"/><rect x="569" y="184" width="30" height="1"/><rect x="574" y="175" width="17" height="1"/></g><path d="M591 175.5 Q594 176 595 180 L596.5 184.5" fill="none" stroke="#e8e8e8" stroke-width="1"/></svg>
<div class="btn" style="top:216px;height:80px"><b></b><div class="sep"></div></div>


<div class="btn" style="top:298px;height:80px"><b></b><div class="sep"></div></div>

<div class="a" style="left:541px;top:344px;width:36px;height:16px;border:1px solid #fff;background:#000"></div><div class="a" style="left:589px;top:344px;width:38px;height:18px;background:#000"></div>
<div class="btn" style="top:380px;height:80px"><b></b><div class="sep"></div></div>


<div class="a" style="left:0;top:0;width:640px;height:480px;will-change:transform">
<div class="a" style="left:1.5px;top:1px;width:16px;height:15px;line-height:16px;text-align:center;font-family:'Liberation Sans',sans-serif;font-size:14.5px;color:#333;transform:scaleX(0.9);">M</div>
<div class="t " style="left:33.5px;top:2px;color:#fff;">2µs -6.0400µs</div>
<div class="t " style="left:308px;top:2px;color:#fff;">Trig´d</div>
<div class="t " style="left:486px;top:2px;color:#fff;">100%</div>
<div class="m" style="left:0;top:157.3px;color:#ffff00;font-weight:bold;transform:translateX(0.8px) scale(0.82,1.15);clip-path:inset(0 0 4px 0)">1</div>
<div class="m" style="left:0;top:278px;color:#ff00ff;">2</div>
<div class="a" style="left:512.0px;top:143.25px;color:#ffff00;font-family:'Liberation Sans',sans-serif;font-weight:bold;font-size:30.0px;line-height:30.0px;-webkit-text-stroke:1.2px #ffff00;transform-origin:0 0;transform:scale(0.34,0.51);">T</div>
<div class="t " style="left:16px;top:338px;color:#a8a8a8;">A:</div>
<div class="p" style="left:32px;top:337px;font-size:15px;transform:translateY(0.7px);clip-path:inset(0 0 2.8px 0);">1</div>
<div class="t " style="left:64px;top:338px;color:#a8a8a8;">Period</div>
<div class="t " style="left:200px;top:338px;color:#a8a8a8;">4.999µs</div>
<div class="t " style="left:16px;top:354px;color:#a8a8a8;">B:</div>
<div class="p" style="left:32px;top:353px;font-size:15px;transform:translateY(0.7px);clip-path:inset(0 0 2.8px 0);">1</div>
<div class="t " style="left:64px;top:354px;color:#a8a8a8;">Frequency</div>
<div class="t " style="left:192px;top:354px;color:#a8a8a8;">200.0kHz</div>
<div class="t " style="left:16px;top:370px;color:#a8a8a8;">C:</div>
<div class="p" style="left:32px;top:369px;font-size:15px;transform:translateY(0.7px);clip-path:inset(0 0 2.8px 0);">1</div>
<div class="t " style="left:64px;top:370px;color:#a8a8a8;">Duty Cycle</div>
<div class="t " style="left:216px;top:370px;color:#a8a8a8;">22.7%</div>
<div class="t " style="left:16px;top:386px;color:#a8a8a8;">D:</div>
<div class="p" style="left:32px;top:385px;font-size:12.5px;transform:scaleX(0.9);">Off</div>
<div class="t " style="left:256px;top:402px;color:#fff;">Edge</div>
<div class="p" style="left:352px;top:401px;font-size:15px;transform:translateY(0.7px);clip-path:inset(0 0 2.8px 0);">1</div>
<div class="t " style="left:416px;top:402px;color:#fff;">DC</div>
<div class="t " style="left:480px;top:402px;color:#fff;">1.80V</div>
<div class="t " style="left:9px;top:418px;color:#000;">1: 2.00V</div>
<div class="t " style="left:9px;top:434px;color:#fff;">DC1MΩ</div>
<div class="t " style="left:9px;top:449px;color:#fff;">ofs</div>
<div class="t " style="left:54.5px;top:449px;color:#fff;">-40.0mV</div>
<div class="t " style="left:112.5px;top:418px;color:#000;">2: 2.00V</div>
<div class="t " style="left:112.5px;top:434px;color:#fff;">DC1MΩ</div>
<div class="t " style="left:112.5px;top:449px;color:#fff;">ofs</div>
<div class="t " style="left:165.5px;top:449px;color:#fff;">-6.08V</div>
<div class="t " style="left:215.5px;top:418px;color:#111;">3: 1.00V</div>
<div class="t " style="left:215.5px;top:434px;color:#fff;">AC1MΩ</div>
<div class="t " style="left:215.5px;top:449px;color:#fff;">Empty</div>
<div class="t " style="left:318.5px;top:418px;color:#111;">4: 1.00V</div>
<div class="t " style="left:318.5px;top:434px;color:#fff;">DC1MΩ</div>
<div class="t " style="left:318.5px;top:449px;color:#fff;">Empty</div>
<div class="a" style="left:-0.5px;top:462px;font-family:'Liberation Sans',sans-serif;font-size:17.5px;line-height:18px;color:#fff;white-space:nowrap;transform-origin:0 0;transform:scaleX(0.93);letter-spacing:-0.3px;-webkit-text-stroke:0.5px #fff;">LeCroy</div>
<div class="t " style="left:144px;top:466px;color:#fff;">f:200.328kHz</div>
<div class="t " style="left:256px;top:466px;color:#fff;">25MS</div>
<div class="t " style="left:304px;top:466px;color:#fff;">500 points</div>
<div class="t " style="left:432px;top:466px;color:#fff;">RTC:2020/07/20 14:59:56</div>
<div class="t " style="left:571px;top:20px;color:#000;">CH1</div>
<div class="t " style="left:551px;top:62px;color:#fff;">Coupling</div>
<div class="t " style="left:563px;top:111px;color:#fff;">DC1MΩ</div>
<div class="t " style="left:547px;top:144px;color:#fff;">Bandwidth</div>
<div class="t " style="left:567px;top:193px;color:#fff;">Full</div>
<div class="t " style="left:563px;top:226px;color:#fff;">Probe</div>
<div class="t " style="left:567px;top:265px;color:#fff;">10:1</div>
<div class="t " style="left:559px;top:308px;color:#fff;">Invert</div>
<div class="t " style="left:548px;top:347px;color:#fff;">Off</div>
<div class="t " style="left:600px;top:347px;color:#fff;">On</div>
<div class="t " style="left:567px;top:390px;color:#fff;">Next</div>
<div class="t " style="left:563px;top:429px;color:#fff;">(1/2)</div>
</div>
</body></html>
